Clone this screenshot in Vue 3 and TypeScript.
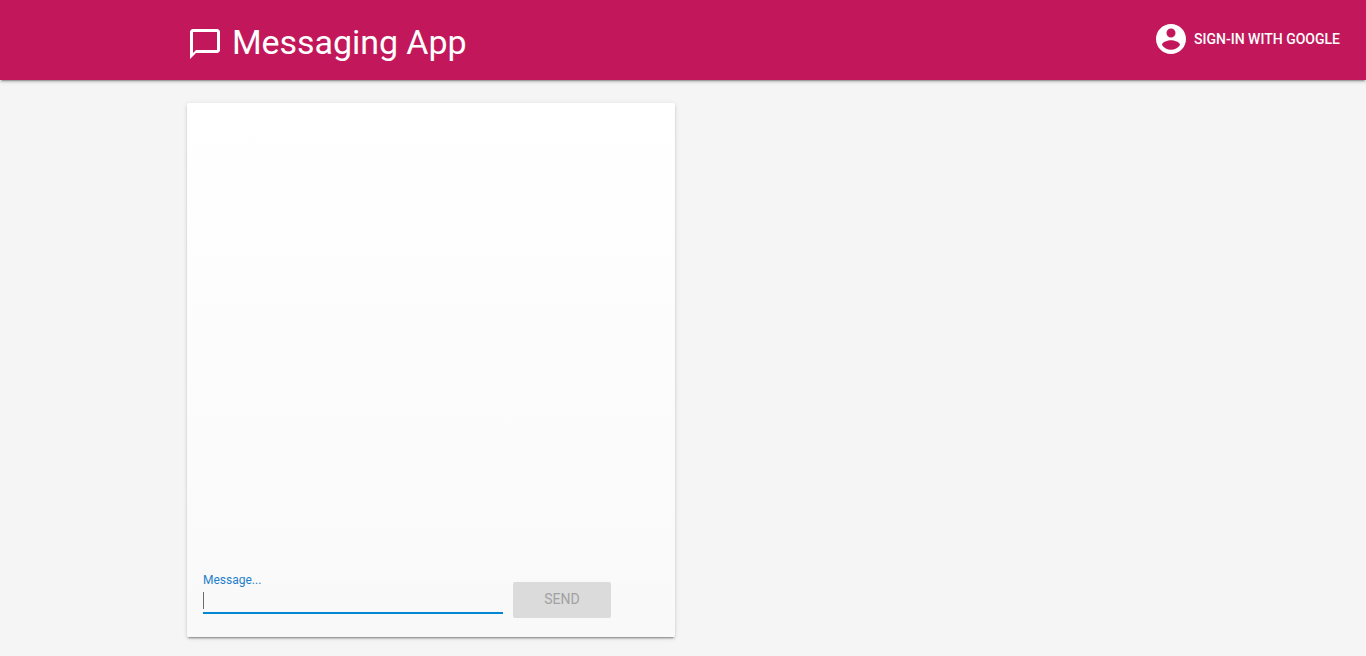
<script setup lang="ts">
import { ref } from 'vue'

const message = ref<string>('')
</script>

<template>
  <div class="layout">
    <header class="header">
      <h3 class="title">
        <svg class="icon" viewBox="0 0 24 24" aria-hidden="true">
          <path d="M20 2H4c-1.100 0-2 .9-2 2v18l4-4h14c1.100 0 2-.9 2-2V4c0-1.100-.9-2-2-2zm0 14H6l-2 2V4h16v12z" />
        </svg>
        <span>Messaging App</span>
      </h3>
      <button class="sign-in" type="button">
        <svg class="icon" viewBox="0 0 24 24" aria-hidden="true">
          <path d="M12 2C6.480 2 2 6.480 2 12s4.480 10 10 10 10-4.480 10-10S17.520 2 12 2zm0 3c1.660 0 3 1.340 3 3s-1.340 3-3 3-3-1.340-3-3 1.340-3 3-3zm0 14.200c-2.500 0-4.710-1.280-6-3.220.03-1.990 4-3.080 6-3.080 1.990 0 5.970 1.090 6 3.080-1.290 1.940-3.500 3.220-6 3.220z" />
        </svg>
        <span>Sign-in with Google</span>
      </button>
    </header>
    <main class="main">
      <section class="card">
        <div class="messages"></div>
        <form class="form" @submit.prevent>
          <label class="field">
            <span class="label">Message...</span>
            <span class="entry"><span class="caret"></span>{{ message }}</span>
          </label>
          <button class="send" type="submit" :disabled="!message">Send</button>
        </form>
      </section>
    </main>
  </div>
</template>

<style>
body {
  background: #f5f5f5;
}
</style>

<style scoped>
.layout {
  height: 656px;
  overflow: hidden;
  display: flex;
  flex-direction: column;
  font-family: Roboto, "Liberation Sans", sans-serif;
  background: #f5f5f5;
}

.header {
  flex: none;
  box-sizing: border-box;
  height: 80px;
  display: flex;
  align-items: flex-start;
  justify-content: space-between;
  padding: 21px 26px 0 187px;
  color: #fff;
  background: #c2185b;
  box-shadow: 0 2px 2px 0 rgba(0, 0, 0, 0.14), 0 3px 1px -2px rgba(0, 0, 0, 0.2), 0 1px 5px 0 rgba(0, 0, 0, 0.12);
}

.icon {
  flex: none;
  width: 36px;
  height: 36px;
  fill: currentColor;
}

.title {
  display: flex;
  gap: 9px;
  margin: 0;
  font-size: 34px;
  font-weight: 400;
  line-height: 42px;
  letter-spacing: -0.06px;
}

.title .icon {
  margin-top: 5px;
}

.sign-in {
  display: flex;
  align-items: center;
  gap: 4.6px;
  padding: 0;
  border: 0;
  color: inherit;
  background: none;
  font: 500 14px/36px Roboto, sans-serif;
  text-transform: uppercase;
}

.main {
  flex: 1;
  padding: 23px 0 0 187px;
}

.card {
  box-sizing: border-box;
  width: 488px;
  height: 534px;
  display: flex;
  flex-direction: column;
  padding: 16px 16px 19px;
  border-radius: 2px;
  background: linear-gradient(to bottom, #fff, #f9f9f9);
  box-shadow: 0 2px 2px 0 rgba(0, 0, 0, 0.14), 0 3px 1px -2px rgba(0, 0, 0, 0.2), 0 1px 5px 0 rgba(0, 0, 0, 0.12);
}

.messages {
  flex: 1;
}

.form {
  display: flex;
  align-items: flex-end;
  gap: 10px;
}

.field {
  width: 300px;
  margin-bottom: 4px;
  display: flex;
  flex-direction: column;
}

.label {
  font-size: 12px;
  line-height: 16px;
  color: #1e7fcb;
}

.entry {
  height: 24px;
  display: flex;
  align-items: flex-start;
  padding-top: 2px;
  box-sizing: border-box;
  border-bottom: 2px solid #0288d1;
  margin-top: 2px;
  font-size: 16px;
  line-height: 17px;
}

.caret {
  width: 1px;
  height: 17px;
  background: #6c6c6c;
}

.send {
  width: 98px;
  height: 36px;
  padding: 0 0 2px;
  border: 0;
  border-radius: 2px;
  font: 400 14px/34px Roboto, sans-serif;
  text-transform: uppercase;
  color: #a2a2a2;
  background: #dbdbdb;
}
</style>
